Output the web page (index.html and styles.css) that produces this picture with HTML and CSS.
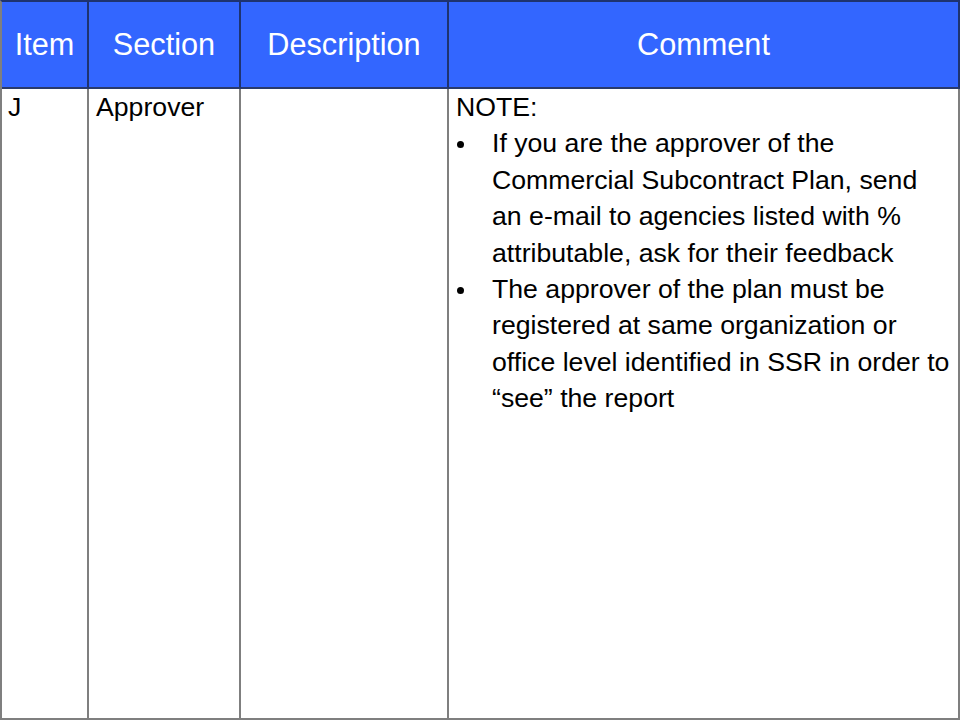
FILE: index.html
```html
<!DOCTYPE html>
<html>
<head>
<meta charset="utf-8">
<link rel="stylesheet" href="styles.css">
</head>
<body>
<table class="grid">
  <thead>
    <tr class="head-row">
      <th class="c-item">Item</th>
      <th class="c-section">Section</th>
      <th class="c-desc">Description</th>
      <th class="c-comment">Comment</th>
    </tr>
  </thead>
  <tbody>
    <tr class="body-row">
      <td>J</td>
      <td>Approver</td>
      <td></td>
      <td>
        <div class="note">NOTE:</div>
        <ul class="bullets">
          <li>If you are the approver of the<br>Commercial Subcontract Plan, send<br>an e-mail to agencies listed with %<br>attributable, ask for their feedback</li>
          <li>The approver of the plan must be<br>registered at same organization or<br>office level identified in SSR in order to<br>“see” the report</li>
        </ul>
      </td>
    </tr>
  </tbody>
</table>
</body>
</html>
```
FILE: styles.css
```css
html, body {
  margin: 0;
  padding: 0;
  background: #ffffff;
}
body {
  font-family: "Liberation Sans", Arial, sans-serif;
  width: 960px;
  height: 720px;
  overflow: hidden;
}
.grid {
  border-collapse: separate;
  border-spacing: 0;
  table-layout: fixed;
  width: 960px;
  height: 720px;
  border-left: 2px solid #7f7f7f;
  border-top: 2px solid #1e3370;
  box-sizing: border-box;
}
.grid th,
.grid td {
  box-sizing: border-box;
  border-right: 2px solid #7f7f7f;
  border-bottom: 2px solid #7f7f7f;
  padding: 0;
}
.head-row {
  height: 87px;
}
.grid th {
  background: #3366ff;
  color: #ffffff;
  font-weight: normal;
  font-size: 30.67px;
  text-align: center;
  vertical-align: middle;
  border-right-color: #1e3370;
  border-bottom-color: #2a3a6a;
  padding-top: 0;
}
.c-item { width: 87px; }
.c-section { width: 152px; }
.c-desc { width: 208px; }
.c-comment { width: 511px; }
.grid td {
  vertical-align: top;
  font-size: 26.67px;
  line-height: 36.4px;
  color: #000000;
  padding: 0 0 0 7px;
  white-space: nowrap;
}
.grid td:first-child {
  padding-left: 6px;
}
.note {
  margin: 0;
}
.bullets {
  list-style: none;
  margin: 0;
  padding: 0;
}
.bullets li {
  display: flex;
  align-items: flex-start;
}
.bullets li::before {
  content: "";
  flex: none;
  width: 7px;
  height: 7px;
  border-radius: 50%;
  background: #000000;
  margin: 16px 28px 0 1px;
}
```
